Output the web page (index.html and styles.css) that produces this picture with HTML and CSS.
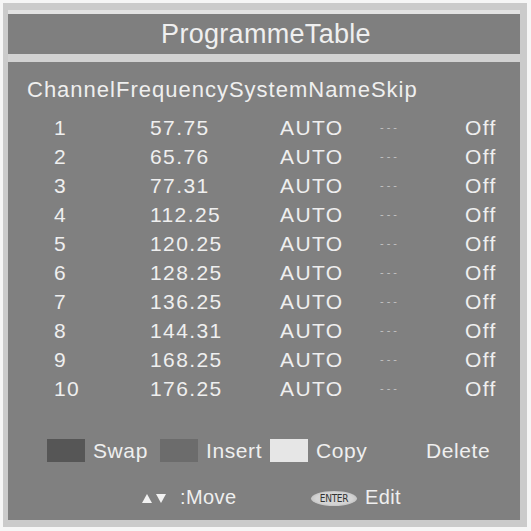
FILE: index.html
```html
<!DOCTYPE html>
<html>
<head>
<meta charset="utf-8">
<link rel="stylesheet" href="styles.css">
</head>
<body>
<div class="frame">
  <div class="title">ProgrammeTable</div>
  <div class="stripe"></div>
  <div class="main">
    <div class="head">ChannelFrequencySystemNameSkip</div>
    <div class="rows">
      <div class="row"><span>1</span><span>57.75</span><span>AUTO</span><span class="dots">---</span><span>Off</span></div>
      <div class="row"><span>2</span><span>65.76</span><span>AUTO</span><span class="dots">---</span><span>Off</span></div>
      <div class="row"><span>3</span><span>77.31</span><span>AUTO</span><span class="dots">---</span><span>Off</span></div>
      <div class="row"><span>4</span><span>112.25</span><span>AUTO</span><span class="dots">---</span><span>Off</span></div>
      <div class="row"><span>5</span><span>120.25</span><span>AUTO</span><span class="dots">---</span><span>Off</span></div>
      <div class="row"><span>6</span><span>128.25</span><span>AUTO</span><span class="dots">---</span><span>Off</span></div>
      <div class="row"><span>7</span><span>136.25</span><span>AUTO</span><span class="dots">---</span><span>Off</span></div>
      <div class="row"><span>8</span><span>144.31</span><span>AUTO</span><span class="dots">---</span><span>Off</span></div>
      <div class="row"><span>9</span><span>168.25</span><span>AUTO</span><span class="dots">---</span><span>Off</span></div>
      <div class="row"><span>10</span><span>176.25</span><span>AUTO</span><span class="dots">---</span><span>Off</span></div>
    </div>
    <div class="legend">
      <div class="item"><span class="sw sw-red"></span><span>Swap</span></div>
      <div class="item"><span class="sw sw-green"></span><span>Insert</span></div>
      <div class="item"><span class="sw sw-yellow"></span><span>Copy</span></div>
      <div class="item"><span class="sw sw-blue"></span><span>Delete</span></div>
    </div>
    <div class="nav">
      <div class="navcell">
        <svg class="arrows" width="25" height="9" viewBox="0 0 25 9"><polygon points="0,9 5,0 10,9" fill="#f2f2f2"/><polygon points="14,0 24,0 19,9" fill="#f2f2f2"/></svg>
        <span>:Move</span>
      </div>
      <div class="navcell">
        <span class="enter">ENTER</span>
        <span>Edit</span>
      </div>
    </div>
  </div>
</div>
</body>
</html>
```
FILE: styles.css
```css
html, body {
  margin: 0;
  padding: 0;
  background: #f6f6f6;
}
body {
  font-family: "Liberation Sans", Arial, sans-serif;
  color: #efefef;
}
.frame {
  box-sizing: border-box;
  width: 524px;
  height: 524px;
  margin: 3px 0 0 3px;
  background: #cbcbcb;
  padding: 7px 7px 7px 5px;
  display: flex;
  flex-direction: column;
}
.title {
  box-sizing: border-box;
  height: 44px;
  border-top: 4px solid #e2e2e2;
  background: #7f7f7f;
  font-size: 27px;
  letter-spacing: 0.3px;
  line-height: 40px;
  text-align: center;
  padding-left: 4px;
}
.stripe {
  height: 8px;
  background: #d2d2d2;
}
.main {
  flex: 1;
  background: #808080;
  display: flex;
  flex-direction: column;
  padding-top: 14px;
}
.head {
  font-size: 22px;
  letter-spacing: 1px;
  line-height: 28px;
  padding-left: 19px;
  margin-bottom: 9px;
}
.rows {
  display: flex;
  flex-direction: column;
}
.row {
  display: grid;
  grid-template-columns: 96px 130px 100px 85px 1fr;
  padding-left: 46px;
  font-size: 21px;
  letter-spacing: 1.4px;
  line-height: 29px;
  height: 29px;
}
.dots {
  font-size: 11px;
  letter-spacing: 3px;
  color: #c4c4c4;
}
.legend {
  display: grid;
  grid-template-columns: 113px 110px 110px auto;
  padding-left: 39px;
  margin-top: 36px;
  font-size: 21px;
  letter-spacing: 0.6px;
  line-height: 23px;
}
.item {
  display: flex;
  align-items: center;
  gap: 8px;
}
.sw {
  width: 38px;
  height: 23px;
  flex: none;
}
.sw-red { background: #565656; }
.sw-green { background: #6c6c6c; }
.sw-yellow { background: #e6e6e6; }
.sw-blue { background: #808080; }
.nav {
  display: grid;
  grid-template-columns: 169px auto;
  padding-left: 134px;
  margin-top: 25px;
  font-size: 20px;
  letter-spacing: 0.4px;
  line-height: 20px;
}
.navcell {
  display: flex;
  align-items: center;
}
.arrows {
  margin-right: 13px;
  margin-top: 3px;
}
.enter {
  width: 46px;
  height: 15px;
  border-radius: 50%;
  background: radial-gradient(ellipse at center, #d4d4d4 55%, #a8a8a8 100%);
  color: #333333;
  font-family: "DejaVu Sans Condensed", "DejaVu Sans", sans-serif;
  font-size: 10px;
  letter-spacing: -0.3px;
  line-height: 15px;
  text-align: center;
  margin-right: 8px;
  margin-top: 2px;
}
```
